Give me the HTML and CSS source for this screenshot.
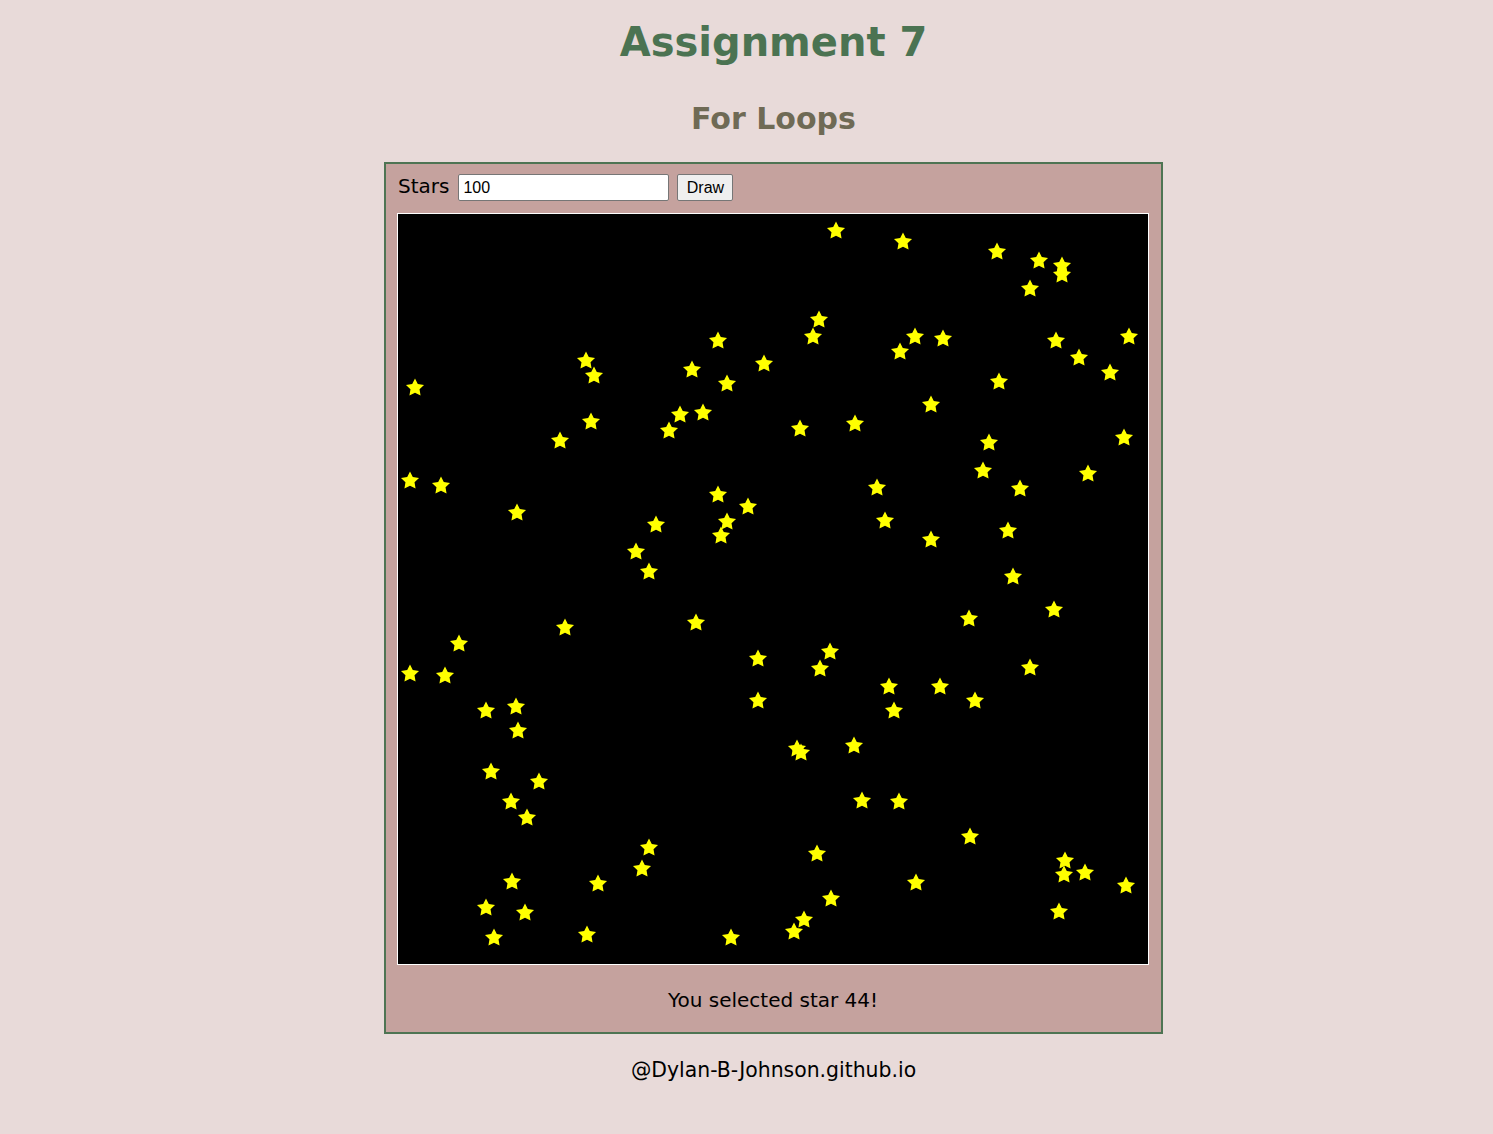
FILE: index.html
```html
<!DOCTYPE html>
<html lang="en">
<head>
<meta charset="utf-8">
<title>Assignment 7</title>
<link rel="stylesheet" href="styles.css">
</head>
<body>
<h1 class="title">Assignment 7</h1>
<h2 class="subtitle">For Loops</h2>
<main class="panel">
  <div class="controls">
    <label class="label" for="stars">Stars</label>
    <input class="num" id="stars" type="text" value="100">
    <button class="btn" type="button">Draw</button>
  </div>
  <div class="sky">
    <svg class="sky-svg" width="750" height="750" viewBox="0 0 750 750" xmlns="http://www.w3.org/2000/svg">
      <defs>
        <polygon id="st" fill="#ffff00" points="0,-8.6 2.79,-2.94 9.03,-2.04 4.52,2.37 5.58,8.59 0,5.65 -5.58,8.59 -4.52,2.37 -9.03,-2.04 -2.79,-2.94"/>
      </defs>
      <use href="#st" x="438" y="16"/>
      <use href="#st" x="505" y="27"/>
      <use href="#st" x="599" y="37"/>
      <use href="#st" x="641" y="46"/>
      <use href="#st" x="664" y="51"/>
      <use href="#st" x="664" y="60"/>
      <use href="#st" x="632" y="74"/>
      <use href="#st" x="421" y="105"/>
      <use href="#st" x="415" y="122"/>
      <use href="#st" x="320" y="126"/>
      <use href="#st" x="517" y="122"/>
      <use href="#st" x="545" y="124"/>
      <use href="#st" x="502" y="137"/>
      <use href="#st" x="658" y="126"/>
      <use href="#st" x="731" y="122"/>
      <use href="#st" x="681" y="143"/>
      <use href="#st" x="712" y="158"/>
      <use href="#st" x="188" y="146"/>
      <use href="#st" x="196" y="161"/>
      <use href="#st" x="294" y="155"/>
      <use href="#st" x="366" y="149"/>
      <use href="#st" x="329" y="169"/>
      <use href="#st" x="17" y="173"/>
      <use href="#st" x="601" y="167"/>
      <use href="#st" x="533" y="190"/>
      <use href="#st" x="282" y="200"/>
      <use href="#st" x="305" y="198"/>
      <use href="#st" x="193" y="207"/>
      <use href="#st" x="271" y="216"/>
      <use href="#st" x="402" y="214"/>
      <use href="#st" x="457" y="209"/>
      <use href="#st" x="162" y="226"/>
      <use href="#st" x="591" y="228"/>
      <use href="#st" x="726" y="223"/>
      <use href="#st" x="585" y="256"/>
      <use href="#st" x="690" y="259"/>
      <use href="#st" x="12" y="266"/>
      <use href="#st" x="43" y="271"/>
      <use href="#st" x="479" y="273"/>
      <use href="#st" x="622" y="274"/>
      <use href="#st" x="320" y="280"/>
      <use href="#st" x="350" y="292"/>
      <use href="#st" x="119" y="298"/>
      <use href="#st" x="487" y="306"/>
      <use href="#st" x="258" y="310"/>
      <use href="#st" x="329" y="307"/>
      <use href="#st" x="323" y="321"/>
      <use href="#st" x="610" y="316"/>
      <use href="#st" x="533" y="325"/>
      <use href="#st" x="238" y="337"/>
      <use href="#st" x="251" y="357"/>
      <use href="#st" x="615" y="362"/>
      <use href="#st" x="656" y="395"/>
      <use href="#st" x="571" y="404"/>
      <use href="#st" x="167" y="413"/>
      <use href="#st" x="298" y="408"/>
      <use href="#st" x="61" y="429"/>
      <use href="#st" x="432" y="437"/>
      <use href="#st" x="360" y="444"/>
      <use href="#st" x="422" y="454"/>
      <use href="#st" x="632" y="453"/>
      <use href="#st" x="12" y="459"/>
      <use href="#st" x="47" y="461"/>
      <use href="#st" x="491" y="472"/>
      <use href="#st" x="542" y="472"/>
      <use href="#st" x="577" y="486"/>
      <use href="#st" x="360" y="486"/>
      <use href="#st" x="88" y="496"/>
      <use href="#st" x="118" y="492"/>
      <use href="#st" x="496" y="496"/>
      <use href="#st" x="120" y="516"/>
      <use href="#st" x="399" y="534"/>
      <use href="#st" x="403" y="538"/>
      <use href="#st" x="456" y="531"/>
      <use href="#st" x="93" y="557"/>
      <use href="#st" x="141" y="567"/>
      <use href="#st" x="113" y="587"/>
      <use href="#st" x="129" y="603"/>
      <use href="#st" x="464" y="586"/>
      <use href="#st" x="501" y="587"/>
      <use href="#st" x="572" y="622"/>
      <use href="#st" x="251" y="633"/>
      <use href="#st" x="419" y="639"/>
      <use href="#st" x="667" y="646"/>
      <use href="#st" x="666" y="660"/>
      <use href="#st" x="687" y="658"/>
      <use href="#st" x="244" y="654"/>
      <use href="#st" x="114" y="667"/>
      <use href="#st" x="200" y="669"/>
      <use href="#st" x="518" y="668"/>
      <use href="#st" x="728" y="671"/>
      <use href="#st" x="433" y="684"/>
      <use href="#st" x="88" y="693"/>
      <use href="#st" x="127" y="698"/>
      <use href="#st" x="661" y="697"/>
      <use href="#st" x="406" y="705"/>
      <use href="#st" x="396" y="717"/>
      <use href="#st" x="96" y="723"/>
      <use href="#st" x="189" y="720"/>
      <use href="#st" x="333" y="723"/>
    </svg>
  </div>
  <p class="message">You selected star 44!</p>
</main>
<footer class="footer">@Dylan-B-Johnson.github.io</footer>
</body>
</html>
```

FILE: styles.css
```css
html {
  background: #e8dad9;
}

body {
  margin: 0;
  padding: 18px 8px 0 62px;
  background: #e8dad9;
  font-family: "DejaVu Sans", Verdana, sans-serif;
  font-size: 20px;
  color: #000;
}

.title {
  margin: 0;
  font-size: 40px;
  line-height: 48px;
  font-weight: bold;
  text-align: center;
  color: #4b7352;
}

.subtitle {
  margin: 35px 0 25px;
  font-size: 30px;
  line-height: 36px;
  font-weight: bold;
  text-align: center;
  color: #6f6a55;
}

.panel {
  display: block;
  width: 779px;
  box-sizing: border-box;
  margin: 0 auto;
  border: 2px solid #4e7453;
  padding: 10px 12px 20px 11px;
  background: #c5a29e;
}

.controls {
  display: flex;
  align-items: center;
  height: 27px;
  padding-left: 1px;
}

.label {
  align-self: flex-start;
  font-size: 20px;
  line-height: 24px;
  margin-right: 9px;
}

.num {
  box-sizing: border-box;
  width: 211px;
  height: 27px;
  margin: 0 8px 0 0;
  padding: 1px 4px;
  border: 1px solid #767676;
  border-radius: 2px;
  background: #fff;
  font-family: "Liberation Sans", Arial, sans-serif;
  font-size: 16px;
  color: #000;
}

.btn {
  box-sizing: border-box;
  width: 56px;
  height: 27px;
  margin: 0;
  padding: 0 6px;
  border: 1px solid #767676;
  border-radius: 2px;
  background: #efefef;
  font-family: "Liberation Sans", Arial, sans-serif;
  font-size: 16px;
  color: #000;
}

.sky {
  margin-top: 12px;
  width: 752px;
  height: 752px;
  box-sizing: border-box;
  border: 1px solid #fff;
  background: #000;
}

.sky-svg {
  display: block;
}

.message {
  margin: 23px 0 0;
  line-height: 24px;
  text-align: center;
}

.footer {
  margin-top: 24px;
  line-height: 24px;
  font-size: 20.4px;
  text-align: center;
}
```
